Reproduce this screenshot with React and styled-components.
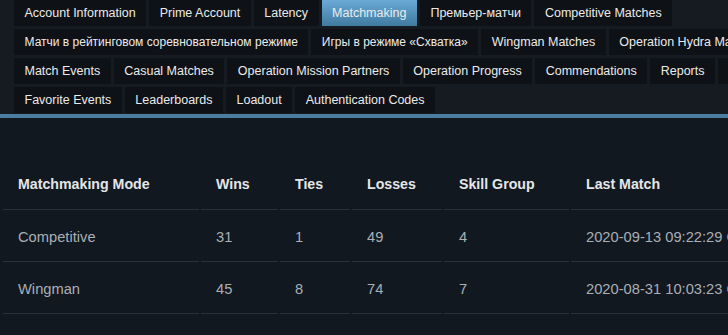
import React from 'react';
import styled, { createGlobalStyle } from 'styled-components';

const GlobalStyle = createGlobalStyle`
    html, body {
        margin: 0;
        padding: 0;
        background: #121820;
        overflow: hidden;
    }
    body {
        font-family: "Liberation Sans", Arial, sans-serif;
    }
`;

const Page = styled.div`
    width: 728px;
    min-height: 335px;
    overflow: hidden;
    background: #121820;
`;

const Header = styled.div`
    width: 880px;
    background: #161a21;
    border-bottom: 4px solid #4b7da1;
    padding: 0 0 1px 14px;
    box-sizing: border-box;
`;

const TabBar = styled.div`
    display: flex;
    flex-wrap: wrap;
    column-gap: 3px;
    row-gap: 3px;
    width: 830px;
`;

const Tab = styled.div`
    height: 26px;
    line-height: 26px;
    padding: 0 10.5px;
    font-size: ${p => (p.$compact ? '12px' : '12.5px')};
    color: #ebebeb;
    white-space: nowrap;
    background: ${p => p.$active
        ? 'linear-gradient(to bottom, #6aaad6 0%, #3f7aa0 100%)'
        : '#0e1115'};
`;

const Table = styled.table`
    margin: 45px 0 0 1px;
    border-collapse: separate;
    border-spacing: 2px 0;
    table-layout: fixed;
    width: 790px;
`;

const HeadCell = styled.th`
    height: 47px;
    padding: 0 0 4px 15px;
    box-sizing: border-box;
    text-align: left;
    font-size: 14.2px;
    font-weight: bold;
    color: #e4e6e8;
    border-bottom: 1px solid #2b313a;
    vertical-align: middle;
    white-space: nowrap;
`;

const Cell = styled.td`
    height: 52px;
    padding: 2px 0 0 15px;
    box-sizing: border-box;
    font-size: 14.7px;
    color: #a9afb5;
    border-bottom: 1px solid #2b313a;
    vertical-align: middle;
    white-space: nowrap;
    overflow: hidden;
`;

const tabs = [
    { label: 'Account Information' },
    { label: 'Prime Account' },
    { label: 'Latency' },
    { label: 'Matchmaking', active: true },
    { label: 'Премьер-матчи' },
    { label: 'Competitive Matches' },
    { label: 'Матчи в рейтинговом соревновательном режиме', compact: true },
    { label: 'Игры в режиме «Схватка»', compact: true },
    { label: 'Wingman Matches' },
    { label: 'Operation Hydra Matches' },
    { label: 'Match Events' },
    { label: 'Casual Matches' },
    { label: 'Operation Mission Partners' },
    { label: 'Operation Progress' },
    { label: 'Commendations' },
    { label: 'Reports' },
    { label: 'Bans' },
    { label: 'Favorite Events' },
    { label: 'Leaderboards' },
    { label: 'Loadout' },
    { label: 'Authentication Codes' },
];

const columns = [
    { title: 'Matchmaking Mode', width: 196 },
    { title: 'Wins', width: 77 },
    { title: 'Ties', width: 70 },
    { title: 'Losses', width: 90 },
    { title: 'Skill Group', width: 125 },
    { title: 'Last Match', width: 220 },
];

const rows = [
    ['Competitive', '31', '1', '49', '4', '2020-09-13 09:22:29 GMT'],
    ['Wingman', '45', '8', '74', '7', '2020-08-31 10:03:23 GMT'],
];

const App = () => (
    <Page>
        <GlobalStyle />
        <Header>
            <TabBar>
                {tabs.map(t => (
                    <Tab key={t.label} $active={t.active} $compact={t.compact}>
                        {t.label}
                    </Tab>
                ))}
            </TabBar>
        </Header>
        <Table>
            <colgroup>
                {columns.map(c => <col key={c.title} style={{ width: c.width }} />)}
            </colgroup>
            <thead>
                <tr>
                    {columns.map(c => <HeadCell key={c.title}>{c.title}</HeadCell>)}
                </tr>
            </thead>
            <tbody>
                {rows.map(r => (
                    <tr key={r[0]}>
                        {r.map((v, i) => <Cell key={i}>{v}</Cell>)}
                    </tr>
                ))}
            </tbody>
        </Table>
    </Page>
);

export default App;
